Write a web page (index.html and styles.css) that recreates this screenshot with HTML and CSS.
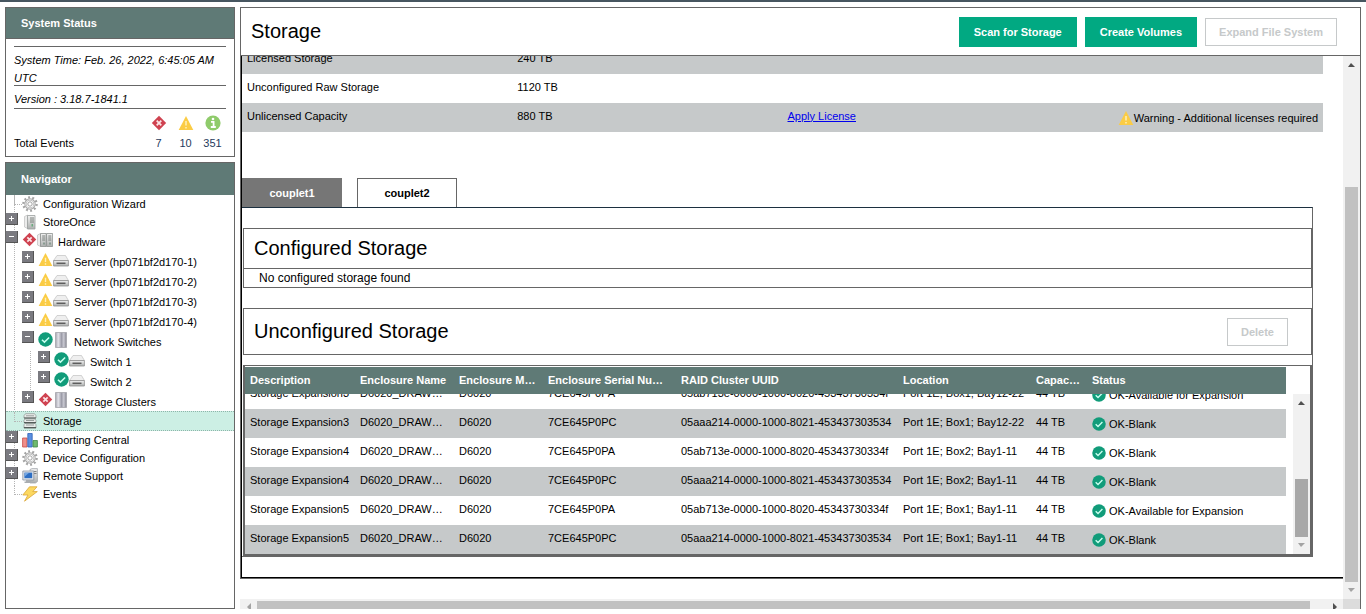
FILE: index.html
```html
<!DOCTYPE html>
<html lang="en">
  <head>
    <meta charset="UTF-8" />
    <meta name="viewport" content="width=device-width, initial-scale=1.0" />
    <title>Storage</title>
    <link rel="stylesheet" href="styles.css">
  </head>
  <body>
    <svg class="defs" width="0" height="0" aria-hidden="true">
      <defs>
        <linearGradient id="metal" x1="0" x2="1" y1="0" y2="0">
          <stop offset="0" stop-color="#a2a2ac" />
          <stop offset="0.25" stop-color="#e3e3ea" />
          <stop offset="0.55" stop-color="#9c9ca8" />
          <stop offset="0.75" stop-color="#c9c9d2" />
          <stop offset="1" stop-color="#85858f" />
        </linearGradient>
        <linearGradient id="steel" x1="0" x2="0" y1="0" y2="1">
          <stop offset="0" stop-color="#f2f2f2" />
          <stop offset="1" stop-color="#adb0af" />
        </linearGradient>
      </defs>
      <symbol id="critical" viewBox="0 0 16 16">
        <path d="M8 .8 15.2 8 8 15.2.8 8z" fill="#cf4250" />
        <path d="m5.7 5.7 4.6 4.6m0-4.6-4.6 4.6" stroke="#fbe4e6" stroke-width="1.8" />
      </symbol>
      <symbol id="warning" viewBox="0 0 16 16">
        <path d="M8 1 15.3 15H.7z" fill="#fbcc45" />
        <path d="M8 6v4.6M8 12v1.5" stroke="#fff0b8" stroke-width="1.5" />
      </symbol>
      <symbol id="info" viewBox="0 0 16 16">
        <circle cx="8" cy="8" r="7.6" fill="#8fcb6b" />
        <path d="M6 6.8h2.6v5M5.8 12h5" stroke="#fff" stroke-width="1.8" fill="none" />
        <circle cx="8" cy="4" r="1.3" fill="#fff" />
      </symbol>
      <symbol id="ok" viewBox="0 0 16 16">
        <circle cx="8" cy="8" r="7.7" fill="#119c7a" />
        <path d="m4.2 8.2 2.7 2.6 5-5" stroke="#c9fff0" stroke-width="1.6" fill="none" />
      </symbol>
      <symbol id="gear" viewBox="0 0 16 16">
        <circle cx="8" cy="8" r="6.6" fill="none" stroke="#a3a3a3" stroke-width="2.4" stroke-dasharray="1.9 2.25" />
        <circle cx="8" cy="8" r="4.6" fill="#fff" stroke="#a9a9a9" stroke-width="2.2" />
        <circle cx="8" cy="8" r="4.4" fill="none" stroke="#dedede" stroke-width="1" />
        <circle cx="8" cy="8" r="2.2" fill="#fff" stroke="#969696" stroke-width=".9" />
      </symbol>
      <symbol id="tower" viewBox="0 0 16 16">
        <path d="M2.500 2.500 5.500 1v13.500l-3-1.500z" fill="#ececec" stroke="#c0c0c0" stroke-width=".7" />
        <path d="M5.500 1.500h7.500v13.500H5.500z" fill="url(#steel)" stroke="#9ba09e" stroke-width=".8" />
        <path d="M8 4h4M8 6h4M8 8h4" stroke="#6f7673" stroke-width=".9" />
        <path d="M9.500 10h1.500v2.500H9.500z" fill="#69a97c" />
      </symbol>
      <symbol id="towers" viewBox="0 0 16 16">
        <path d="M.5 3 3.500 1.500v13L.5 13z" fill="#ececec" stroke="#b5b5b5" stroke-width=".6" />
        <path d="M3.500 1.500h5.700v13H3.500zM9.600 1.500h6v13h-6z" fill="url(#steel)" stroke="#8b918e" stroke-width=".8" />
        <path d="M5.200 4h3M5.200 6h3M5.200 8h3M11.300 4h3M11.300 6h3M11.300 8h3" stroke="#6d7471" stroke-width=".9" />
        <path d="M6.500 10.500h1v2h-1zM12.500 10.500h1v2h-1z" fill="#557a65" />
      </symbol>
      <symbol id="server" viewBox="0 0 16 16">
        <path d="m.6 8.500 3.400-5h8.500l2.900 5z" fill="#efefef" stroke="#c2c2c2" stroke-width=".7" />
        <path d="M.6 8.500h14.800v5.500H.6z" fill="url(#steel)" stroke="#8f8f8f" stroke-width=".8" />
        <path d="M3.500 11.300h9" stroke="#5d5d5d" stroke-width="1.500" />
      </symbol>
      <symbol id="rack" viewBox="0 0 16 16">
        <path d="M2.500.500h11v15h-11z" fill="url(#metal)" stroke="#a5a5ab" stroke-width=".8" />
      </symbol>
      <symbol id="disks" viewBox="0 0 16 16">
        <path d="M3.500.7h9l1.500 2V5H2V2.700zM3 6h10l1 1.200v2.300H2V7.200zM3 10.500h10l1 1.200V15H2v-3.300z" fill="#e9ecea" stroke="#8d9391" stroke-width=".7" />
        <path d="M2 5h12M2 9.700h12M2 14.700h12" stroke="#555b59" stroke-width="1.200" />
        <path d="M4 2.800h8M4 7.500h8M4 12h8" stroke="#8f9694" stroke-width=".9" />
      </symbol>
      <symbol id="chart" viewBox="0 0 16 16">
        <path d="M.6 6h4.400v9H.6z" fill="#ef8f8b" stroke="#c84b48" stroke-width=".8" />
        <path d="M5.800 1.500h4.400V15H5.800z" fill="#5a8fe0" stroke="#2f62b8" stroke-width=".8" />
        <path d="M11 8.500h4.400V15H11z" fill="#6fba6d" stroke="#42894a" stroke-width=".8" />
      </symbol>
      <symbol id="computer" viewBox="0 0 16 16">
        <path d="M8 1.500 10 .6h5.400v13l-2 1.400H8z" fill="url(#steel)" stroke="#9a9ea3" stroke-width=".7" />
        <path d="M11.500 3.500h3M11.500 5.500h3" stroke="#777" stroke-width=".9" />
        <path d="M.8 3h11v9H.8z" fill="#dfe3e8" stroke="#8b94a2" stroke-width=".8" />
        <path d="M2.400 4.600h7.800v5.600H2.400z" fill="#2e6fc4" />
        <path d="M2.800 5h4l-4 3.500z" fill="#74a7e2" />
        <path d="M4 12h5v1.500h1.500V15H2.500v-1.500H4z" fill="#a9adb1" />
      </symbol>
      <symbol id="bolt" viewBox="0 0 16 16">
        <path d="M7.500.8 15 .8 10.800 5.600h4.500L2.500 15.200 6 9H.8z" fill="#fcd860" stroke="#dba637" stroke-width=".8" stroke-linejoin="round" />
      </symbol>
    </svg>

    <div class="layout">
      <aside class="sidebar">
        <section class="card">
          <h2>System Status</h2>
          <div class="status">
            <p class="time">System Time: Feb. 26, 2022, 6:45:05 AM UTC</p>
            <p class="version">Version : 3.18.7-1841.1</p>
            <div class="events">
              <span></span>
              <svg class="icon"><use href="#critical" /></svg>
              <svg class="icon"><use href="#warning" /></svg>
              <svg class="icon"><use href="#info" /></svg>
              <span>Total Events</span>
              <a href="#">7</a>
              <a href="#">10</a>
              <a href="#">351</a>
            </div>
          </div>
        </section>

        <nav class="card navigator">
          <h2>Navigator</h2>
          <ul class="tree">
            <li><div class="node"><i class="elbow"></i><svg class="icon"><use href="#gear" /></svg><a href="#">Configuration Wizard</a></div></li>
            <li><div class="node"><button class="toggle" aria-label="Expand StoreOnce"></button><svg class="icon"><use href="#tower" /></svg><a href="#">StoreOnce</a></div></li>
            <li>
              <div class="node tall"><button class="toggle open" aria-label="Collapse Hardware"></button><svg class="icon state"><use href="#critical" /></svg><svg class="icon"><use href="#towers" /></svg><a href="#">Hardware</a></div>
              <ul>
                <li><div class="node tall"><button class="toggle" aria-label="Expand server 1"></button><svg class="icon state"><use href="#warning" /></svg><svg class="icon"><use href="#server" /></svg><a href="#">Server (hp071bf2d170-1)</a></div></li>
                <li><div class="node tall"><button class="toggle" aria-label="Expand server 2"></button><svg class="icon state"><use href="#warning" /></svg><svg class="icon"><use href="#server" /></svg><a href="#">Server (hp071bf2d170-2)</a></div></li>
                <li><div class="node tall"><button class="toggle" aria-label="Expand server 3"></button><svg class="icon state"><use href="#warning" /></svg><svg class="icon"><use href="#server" /></svg><a href="#">Server (hp071bf2d170-3)</a></div></li>
                <li><div class="node tall"><button class="toggle" aria-label="Expand server 4"></button><svg class="icon state"><use href="#warning" /></svg><svg class="icon"><use href="#server" /></svg><a href="#">Server (hp071bf2d170-4)</a></div></li>
                <li>
                  <div class="node tall"><button class="toggle open" aria-label="Collapse Network Switches"></button><svg class="icon state"><use href="#ok" /></svg><svg class="icon"><use href="#rack" /></svg><a href="#">Network Switches</a></div>
                  <ul>
                    <li><div class="node tall"><button class="toggle" aria-label="Expand Switch 1"></button><svg class="icon state"><use href="#ok" /></svg><svg class="icon"><use href="#server" /></svg><a href="#">Switch 1</a></div></li>
                    <li><div class="node tall"><button class="toggle" aria-label="Expand Switch 2"></button><svg class="icon state"><use href="#ok" /></svg><svg class="icon"><use href="#server" /></svg><a href="#">Switch 2</a></div></li>
                  </ul>
                </li>
                <li><div class="node tall"><button class="toggle" aria-label="Expand Storage Clusters"></button><svg class="icon state"><use href="#critical" /></svg><svg class="icon"><use href="#rack" /></svg><a href="#">Storage Clusters</a></div></li>
              </ul>
            </li>
            <li class="selected"><div class="node"><i class="elbow"></i><svg class="icon"><use href="#disks" /></svg><a href="#">Storage</a></div></li>
            <li><div class="node"><button class="toggle" aria-label="Expand Reporting Central"></button><svg class="icon"><use href="#chart" /></svg><a href="#">Reporting Central</a></div></li>
            <li><div class="node"><button class="toggle" aria-label="Expand Device Configuration"></button><svg class="icon"><use href="#gear" /></svg><a href="#">Device Configuration</a></div></li>
            <li><div class="node"><button class="toggle" aria-label="Expand Remote Support"></button><svg class="icon"><use href="#computer" /></svg><a href="#">Remote Support</a></div></li>
            <li><div class="node"><i class="elbow"></i><svg class="icon"><use href="#bolt" /></svg><a href="#">Events</a></div></li>
          </ul>
        </nav>
      </aside>

      <main class="main">
        <header class="title-bar">
          <h1>Storage</h1>
          <div class="actions">
            <button class="btn">Scan for Storage</button>
            <button class="btn">Create Volumes</button>
            <button class="btn off" disabled>Expand File System</button>
          </div>
        </header>

        <div class="scroller">
          <div class="view">
            <div class="content">
              <table class="summary">
                <tr><td>Licensed Storage</td><td>240 TB</td><td></td><td></td></tr>
                <tr><td>Unconfigured Raw Storage</td><td>1120 TB</td><td></td><td></td></tr>
                <tr>
                  <td>Unlicensed Capacity</td>
                  <td>880 TB</td>
                  <td><a href="#">Apply License</a></td>
                  <td><span class="note"><svg class="icon"><use href="#warning" /></svg>Warning - Additional licenses required</span></td>
                </tr>
              </table>

              <div class="tabs">
                <button class="tab active">couplet1</button>
                <button class="tab">couplet2</button>
              </div>

              <div class="panel">
                <section class="box">
                  <h2>Configured Storage</h2>
                  <p>No configured storage found</p>
                </section>

                <section class="box unconfigured">
                  <div class="box-title">
                    <h2>Unconfigured Storage</h2>
                    <button class="btn off" disabled>Delete</button>
                  </div>
                </section>
                <div class="grid">
                  <table class="drives">
                    <thead>
                      <tr><th>Description</th><th>Enclosure Name</th><th>Enclosure Model</th><th>Enclosure Serial Number</th><th>RAID Cluster UUID</th><th>Location</th><th>Capacity (TB)</th><th>Status</th></tr>
                    </thead>
                    <tbody>
                      <tr><td>Storage Expansion3</td><td>D6020_DRAWER1</td><td>D6020</td><td>7CE645P0PA</td><td>05ab713e-0000-1000-8020-45343730334f</td><td>Port 1E; Box1; Bay12-22</td><td>44 TB</td><td><svg class="icon"><use href="#ok" /></svg>OK-Available for Expansion</td></tr>
                      <tr><td>Storage Expansion3</td><td>D6020_DRAWER1</td><td>D6020</td><td>7CE645P0PC</td><td>05aaa214-0000-1000-8021-453437303534</td><td>Port 1E; Box1; Bay12-22</td><td>44 TB</td><td><svg class="icon"><use href="#ok" /></svg>OK-Blank</td></tr>
                      <tr><td>Storage Expansion4</td><td>D6020_DRAWER2</td><td>D6020</td><td>7CE645P0PA</td><td>05ab713e-0000-1000-8020-45343730334f</td><td>Port 1E; Box2; Bay1-11</td><td>44 TB</td><td><svg class="icon"><use href="#ok" /></svg>OK-Blank</td></tr>
                      <tr><td>Storage Expansion4</td><td>D6020_DRAWER2</td><td>D6020</td><td>7CE645P0PC</td><td>05aaa214-0000-1000-8021-453437303534</td><td>Port 1E; Box2; Bay1-11</td><td>44 TB</td><td><svg class="icon"><use href="#ok" /></svg>OK-Blank</td></tr>
                      <tr><td>Storage Expansion5</td><td>D6020_DRAWER1</td><td>D6020</td><td>7CE645P0PA</td><td>05ab713e-0000-1000-8020-45343730334f</td><td>Port 1E; Box1; Bay1-11</td><td>44 TB</td><td><svg class="icon"><use href="#ok" /></svg>OK-Available for Expansion</td></tr>
                      <tr><td>Storage Expansion5</td><td>D6020_DRAWER1</td><td>D6020</td><td>7CE645P0PC</td><td>05aaa214-0000-1000-8021-453437303534</td><td>Port 1E; Box1; Bay1-11</td><td>44 TB</td><td><svg class="icon"><use href="#ok" /></svg>OK-Blank</td></tr>
                    </tbody>
                  </table>
                  <div class="bar inner">
                    <i class="arrow up"></i>
                    <span class="space"></span>
                    <span class="thumb"></span>
                    <i class="arrow down"></i>
                  </div>
                </div>
              </div>
            </div>
          </div>
          <div class="bar">
            <i class="arrow up"></i>
            <span class="space"></span>
            <span class="thumb"></span>
            <i class="arrow down"></i>
          </div>
          <div class="hbar">
            <i class="arrow left"></i>
            <span class="thumb"></span>
            <i class="arrow right"></i>
          </div>
          <div class="corner"></div>
        </div>
      </main>
    </div>
  </body>
</html>
```

FILE: styles.css
```css
* {
  box-sizing: border-box;
}
body {
  display: flex;
  flex-direction: column;
  height: 100vh;
  margin: 0;
  padding-bottom: 5px;
  border-top: 2px solid #475660;
  background: #fff;
  color: #000;
  font-family: "Liberation Sans", Arial, sans-serif;
  font-size: 11px;
  overflow: hidden;
}
h1,
h2,
p,
ul {
  margin: 0;
  padding: 0;
}
h1,
.box h2 {
  font-size: 20px;
  font-weight: normal;
}
button {
  font-family: inherit;
  font-size: 11px;
  font-weight: bold;
  padding: 0;
}
.defs {
  position: absolute;
}
.icon {
  width: 16px;
  height: 16px;
  flex: none;
}
.layout {
  flex: 1;
  min-height: 0;
  display: flex;
  gap: 5px;
  padding: 5px 5px 0;
}

/* sidebar */
.sidebar {
  width: 230px;
  flex: none;
  display: flex;
  flex-direction: column;
  gap: 5px;
}
.card {
  border: 1px solid #666;
}
.card h2 {
  padding: 0 15px;
  line-height: 32px;
  font-size: 11px;
  color: #fff;
  background: #5f7a76;
}
.card:first-child h2 {
  line-height: 30px;
  border-bottom: 1px solid #666;
}
.status {
  padding: 7px 8px 5px;
}
.time,
.version {
  font-style: italic;
  border-top: 1px solid #666;
  line-height: 18px;
}
.time {
  height: 39px;
  padding-top: 4px;
}
.version {
  padding: 4px 0 0;
  border-bottom: 1px solid #666;
}
.events {
  display: grid;
  grid-template-columns: 1fr 27px 27px 27px;
  justify-items: center;
  row-gap: 4px;
  padding-top: 6px;
  line-height: 16px;
}
.events span {
  justify-self: start;
}
.events a {
  color: #1f3a5c;
  text-decoration: none;
}
.navigator {
  flex: 1;
}

/* tree */
.tree,
.tree ul {
  list-style: none;
}
.tree ul {
  padding-left: 16px;
}
.tree > li,
.tree ul ul {
  background: linear-gradient(#b5b5b5 50%, transparent 50%) 8px 0 / 1px 2px repeat-y;
}
.tree > li:last-child {
  background: none;
}
.node {
  display: flex;
  align-items: flex-start;
  height: 18px;
  line-height: 18px;
}
.node .icon {
  margin-top: 1px;
}
.node a {
  margin-left: 5px;
  color: #000;
  text-decoration: none;
}
.node .toggle,
.elbow {
  flex: none;
  margin-right: 4px;
}
.toggle {
  width: 12px;
  height: 12px;
  border: 0;
  border-right: 1px solid #555;
  border-bottom: 1px solid #555;
  background: linear-gradient(#fff, #fff) 3px 5px / 5px 1px no-repeat,
    linear-gradient(#fff, #fff) 5px 3px / 1px 5px no-repeat, #7a7a80;
}
.toggle.open {
  background: linear-gradient(#fff, #fff) 3px 5px / 5px 1px no-repeat, #7a7a80;
}
.elbow {
  width: 8px;
  height: 10px;
  margin: 0 0 0 8px;
  border-left: 1px dotted #b5b5b5;
  border-bottom: 1px dotted #b5b5b5;
}
.node.tall {
  height: 20px;
  line-height: 22px;
}
.node.tall .state {
  width: 15px;
  height: 15px;
}
.tree .selected {
  border-top: 1px dotted #8fb5aa;
  border-bottom: 1px dotted #8fb5aa;
  background: #ccefe4;
}

/* main area */
.main {
  flex: 1;
  min-width: 0;
  display: flex;
  flex-direction: column;
}
.title-bar {
  flex: none;
  display: flex;
  align-items: center;
  justify-content: space-between;
  height: 49px;
  padding: 0 23px 0 10px;
  border: 1px solid #666;
}
.actions {
  display: flex;
  align-items: center;
  gap: 8px;
}
.btn {
  height: 30px;
  padding: 0 15px;
  border: 0;
  color: #fff;
  background: #01a982;
}
.btn.off {
  height: 28px;
  padding: 0 13px;
  border: 1px solid #c6c9ca;
  color: #c6c9ca;
  background: #fff;
}
.scroller {
  flex: 1;
  min-height: 0;
  display: grid;
  grid-template-columns: minmax(0, 1fr) 17px;
  grid-template-rows: minmax(0, 1fr) 10px;
  border-right: 1px solid #666;
}
.view {
  display: flex;
  flex-direction: column;
  justify-content: flex-end;
  overflow: hidden;
}
.content {
  flex: none;
  margin: 0 0 21px 1px;
  padding-bottom: 20px;
  border-left: 1px solid #000;
  border-bottom: 1px solid #000;
  outline: 1px solid #666;
}

table {
  border-collapse: collapse;
}
.summary {
  width: calc(100% - 20px);
  table-layout: fixed;
}
.summary tr {
  height: 29px;
}
.summary tr:nth-child(odd),
.drives tbody tr:nth-child(even) {
  background: #c6c9ca;
}
.summary td {
  padding: 0 5px 4px;
}
.summary a {
  color: #0000ee;
}
.note {
  display: flex;
  justify-content: flex-end;
  align-items: center;
  padding-top: 5px;
  white-space: nowrap;
}

.tabs {
  display: flex;
  gap: 15px;
  margin-top: 46px;
}
.tab {
  width: 100px;
  height: 29px;
  border: 1px solid #666;
  border-bottom: 0;
  background: #fff;
  color: #000;
}
.tab.active {
  border-color: #767676;
  background: #767676;
  color: #fff;
}
.panel {
  margin-right: 30px;
  padding: 20px 0 0 1px;
  border-top: 1px solid #1c3040;
  border-right: 1px solid #666;
  border-bottom: 1px solid #666;
}
.box {
  border: 1px solid #666;
}
.box h2 {
  padding-left: 10px;
  line-height: 39px;
}
.box p {
  padding-left: 15px;
  border-top: 1px solid #666;
  font-size: 12px;
  line-height: 18px;
}
.unconfigured {
  margin-top: 20px;
}
.box-title {
  display: flex;
  align-items: center;
  justify-content: space-between;
  height: 45px;
  padding-right: 23px;
}

/* drive table */
.grid {
  display: flex;
  justify-content: space-between;
  margin-top: 10px;
  padding-top: 1px;
  border: 2px solid #666;
  border-top-width: 1px;
}
.drives {
  display: block;
  flex: 1;
  min-width: 0;
  margin-right: 7px;
}
.drives thead {
  display: block;
  background: #5f7a76;
  color: #fff;
}
.drives tbody {
  display: flex;
  flex-direction: column;
  justify-content: flex-end;
  height: 160px;
  overflow: hidden;
}
.drives tr {
  flex: none;
  display: grid;
  grid-template-columns: 110fr 99fr 89fr 133fr 222fr 133fr 56fr 199fr;
  line-height: 27px;
}
.drives td,
.drives th {
  padding: 0 5px;
  text-align: left;
  white-space: nowrap;
  overflow: hidden;
  text-overflow: ellipsis;
}
.drives td {
  height: 29px;
}
.drives td:last-child {
  display: flex;
  align-items: center;
  gap: 3px;
  padding-top: 1px;
}
.drives .icon {
  width: 14px;
  height: 14px;
}

/* scroll bars */
.bar,
.hbar {
  display: flex;
  align-items: center;
  background: #f1f1f1;
}
.bar {
  flex-direction: column;
  width: 17px;
}
.bar .thumb {
  width: 13px;
  flex: 395;
  background: #c1c1c1;
}
.bar .space {
  flex: 114;
}
.bar.inner {
  margin-top: 27px;
}
.inner .thumb {
  flex: 58;
  background: #a8a8a8;
}
.inner .space {
  flex: 68;
}
.hbar {
  align-items: stretch;
  overflow: hidden;
}
.hbar .thumb {
  flex: 1;
  margin: 2px 16px 0 0;
  background: #c1c1c1;
}
.arrow {
  flex: none;
  width: 17px;
  height: 17px;
  background: #505050;
  clip-path: polygon(5px 11px, 12px 11px, 8px 7px);
}
.arrow.down {
  background: #a3a3a3;
  clip-path: polygon(5px 6px, 12px 6px, 8px 10px);
}
.arrow.left {
  background: #a3a3a3;
  clip-path: polygon(11px 4px, 11px 12px, 7px 8px);
}
.arrow.right {
  clip-path: polygon(7px 4px, 7px 12px, 11px 8px);
}
.corner {
  background: #dcdcdc;
}
```
